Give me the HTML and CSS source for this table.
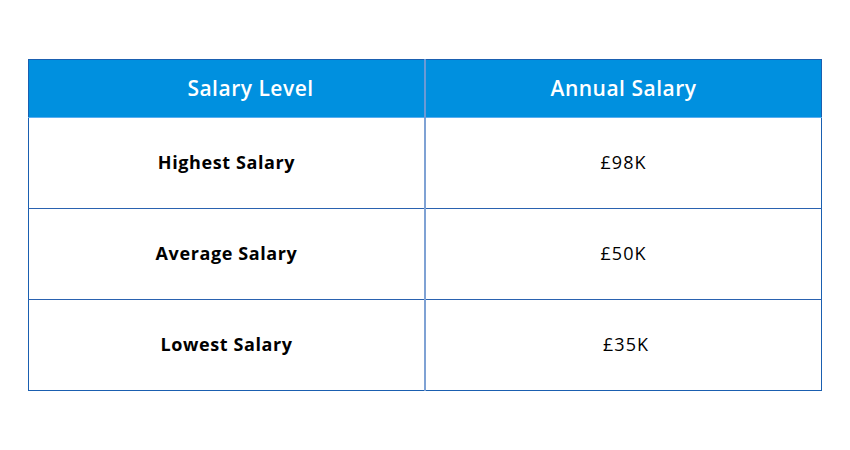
FILE: index.html
```html
<!DOCTYPE html>
<html>
<head>
<meta charset="utf-8">
<link rel="stylesheet" href="styles.css">
</head>
<body>
<div class="page">
  <table class="salary">
    <thead>
      <tr>
        <th class="lvl">Salary Level</th>
        <th>Annual Salary</th>
      </tr>
    </thead>
    <tbody>
      <tr><td class="name">Highest Salary</td><td class="amt">£98K</td></tr>
      <tr><td class="name">Average Salary</td><td class="amt">£50K</td></tr>
      <tr><td class="name">Lowest Salary</td><td class="amt low">£35K</td></tr>
    </tbody>
  </table>
</div>
</body>
</html>
```
FILE: styles.css
```css
html, body {
  margin: 0;
  padding: 0;
  background: #ffffff;
}
.page {
  padding: 59px 0 0 28px;
}
.salary {
  width: 794px;
  border-collapse: collapse;
  font-family: "Open Sans", "Liberation Sans", sans-serif;
  table-layout: fixed;
}
.salary th {
  background: #0090df;
  color: #ffffff;
  font-size: 21px;
  font-weight: 600;
  letter-spacing: 0.5px;
  height: 55px;
  padding: 0 0 2px 0;
  text-align: center;
  border-top: 1px solid #1a5fb0;
  border-bottom: 1px solid #5aaef0;
}
.salary th:first-child {
  border-left: 1px solid #1a5fb0;
  border-right: 2px solid #6a9ad6;
}
.salary th:last-child {
  border-right: 1px solid #1a5fb0;
}
.salary th.lvl {
  padding-left: 48px;
}
.salary td {
  height: 87px;
  padding: 0 0 3px 0;
  text-align: center;
  color: #000000;
  font-size: 18px;
  border-bottom: 1px solid #2a62b0;
}
.salary td:first-child {
  border-left: 1px solid #1a5fb0;
  border-right: 2px solid #7fa2d4;
}
.salary td:last-child {
  border-right: 1px solid #1a5fb0;
}
.salary tbody tr:last-child td {
  border-bottom: 1px solid #1a5fb0;
}
.name {
  font-weight: 700;
  letter-spacing: 0.6px;
}
.amt {
  font-weight: 400;
  letter-spacing: 1px;
}
.low {
  padding-left: 5px !important;
}
```
